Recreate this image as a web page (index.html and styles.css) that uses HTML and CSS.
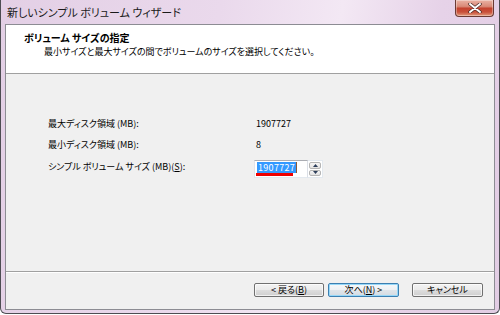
FILE: index.html
```html
<!DOCTYPE html>
<html lang="ja">
<head>
<meta charset="utf-8">
<title>新しいシンプル ボリューム ウィザード</title>
<link rel="stylesheet" href="styles.css">
</head>
<body>
<div class="window">
  <div class="titlebar">
    <span class="title">新しいシンプル ボリューム ウィザード</span>
    <div class="close">
      <svg width="14" height="10" viewBox="0 0 14 10">
        <path d="M2 1 L12 9 M12 1 L2 9" stroke="#4a2a26" stroke-width="3.4" stroke-linecap="round"/>
        <path d="M2 1 L12 9 M12 1 L2 9" stroke="#ffffff" stroke-width="2" stroke-linecap="round"/>
      </svg>
    </div>
  </div>
  <div class="client">
    <div class="header">
      <div class="h-title">ボリューム サイズの指定</div>
      <div class="h-sub">最小サイズと最大サイズの間でボリュームのサイズを選択してください。</div>
    </div>
    <div class="body">
      <div class="form">
        <div class="label">最大ディスク領域 (MB):</div>
        <div class="value">1907727</div>
        <div class="label">最小ディスク領域 (MB):</div>
        <div class="value">8</div>
        <div class="label label-last">シンプル ボリューム サイズ (MB)(<u>S</u>):</div>
        <div class="spin">
          <div class="input"><span class="sel">1907727</span><span class="caret"></span><span class="mark"></span></div>
          <div class="arrows">
            <div class="arrow"><svg width="5" height="3" viewBox="0 0 5 3"><path d="M0 3 L2.5 0 L5 3Z" fill="#2c3e5a"/></svg></div>
            <div class="arrow"><svg width="5" height="3" viewBox="0 0 5 3"><path d="M0 0 L2.5 3 L5 0Z" fill="#2c3e5a"/></svg></div>
          </div>
        </div>
      </div>
    </div>
    <div class="footer">
      <button class="btn btn-back">&lt; 戻る(<u>B</u>)</button>
      <button class="btn btn-next">次へ(<u>N</u>) &gt;</button>
      <button class="btn btn-cancel">キャンセル</button>
    </div>
  </div>
</div>
</body>
</html>
```
FILE: styles.css
```css
* { box-sizing: border-box; }
html, body { margin: 0; padding: 0; background: #ffffff; }
body {
  width: 500px;
  height: 315px;
  overflow: hidden;
  font-family: "Noto Sans CJK JP", "Noto Sans", sans-serif;
  font-feature-settings: "palt";
  color: #000;
}
.window {
  width: 500px;
  height: 314px;
  border: 1px solid #4d4d52;
  border-top: none;
  border-radius: 0 0 6px 6px;
  background: linear-gradient(100deg, #e3cfe5 0%, #ead9ec 40%, #f3e8f4 62%, #e6d2e8 80%, #e2cde4 100%);
  display: flex;
  flex-direction: column;
}
.titlebar {
  height: 24px;
  display: flex;
  align-items: flex-start;
  padding-left: 6px;
}
.title {
  font-size: 11px;
  line-height: 24px;
  color: #1a1a1a;
  white-space: pre;
}
.close {
  margin-left: auto;
  margin-right: 5px;
  width: 39px;
  height: 17px;
  border: 1px solid #6a3a34;
  border-top: none;
  border-radius: 0 0 4px 4px;
  background: linear-gradient(#eab2a4 0%, #d98a78 40%, #c4432f 52%, #c8503a 75%, #e29a7c 100%);
  display: flex;
  align-items: center;
  justify-content: center;
  box-shadow: inset 0 0 0 1px rgba(255,255,255,0.35);
}
.close svg { display: block; }
.client {
  margin: 0 4px 3px 4px;
  flex: 1;
  border: 1px solid #8c8c93;
  background: #f0f0f0;
  display: flex;
  flex-direction: column;
}
.header {
  height: 49px;
  background: #ffffff;
  border-bottom: 1px solid #a0a0a0;
  padding-left: 18px;
  padding-top: 6px;
}
.h-title {
  font-size: 10px;
  font-weight: bold;
  line-height: 14px;
}
.h-sub {
  font-size: 9px;
  line-height: 14px;
  padding-left: 20px;
}
.body {
  height: 198px;
  border-bottom: 1px solid #a0a0a0;
  padding: 39px 0 0 42px;
  font-size: 9px;
}
.form {
  display: grid;
  grid-template-columns: 208px auto;
  grid-template-rows: 21px 21px auto;
  align-items: center;
}
.label, .value { line-height: 21px; white-space: pre; }
.label-last { align-self: start; margin-top: 2px; line-height: 20px; }
.spin {
  align-self: start;
  margin-top: 5px;
  margin-left: -2px;
  display: flex;
  height: 18px;
}
.input {
  position: relative;
  width: 54px;
  height: 18px;
  background: #ffffff;
  border: 1px solid #abadb3;
  border-left-color: #e2e3ea;
  border-right-color: #dbdfe6;
  border-bottom-color: #e3e9ef;
  padding: 1px 0 0 2px;
  display: flex;
  align-items: flex-start;
}
.sel {
  background: #3399ff;
  color: #ffffff;
  font-size: 9px;
  line-height: 11px;
  height: 11px;
  padding: 0 1px;
  letter-spacing: 0.3px;
}
.caret {
  width: 1px;
  height: 11px;
  background: #8a5a3a;
}
.mark {
  position: absolute;
  left: 1px;
  top: 12px;
  width: 37px;
  height: 3px;
  background: #ee0000;
}
.arrows {
  width: 15px;
  height: 18px;
  display: flex;
  flex-direction: column;
  gap: 1px;
  padding: 1px 0;
  background: #ffffff;
  border: 1px solid #e3e9ef;
  border-left: none;
}
.arrow {
  flex: 1;
  border: 1px solid #b5b5b5;
  border-radius: 2px;
  background: linear-gradient(#f6f6f6, #e2e2e2);
  display: flex;
  align-items: center;
  justify-content: center;
  margin: 0 1px;
}
.arrow svg { display: block; }
.footer {
  flex: 1;
  border-top: 1px solid #ffffff;
  display: flex;
  align-items: flex-start;
  padding: 10px 11px 0 0;
  justify-content: flex-end;
}
.btn {
  height: 14px;
  width: 71px;
  padding: 0;
  margin: 0;
  font-family: "Noto Sans CJK JP", "Noto Sans", sans-serif;
  font-feature-settings: "palt";
  font-size: 9px;
  line-height: 12px;
  color: #000;
  border: 1px solid #707070;
  border-radius: 2px;
  background: linear-gradient(#f3f3f3 0%, #ebebeb 48%, #dddddd 52%, #cfcfcf 100%);
  box-shadow: inset 0 0 0 1px rgba(255,255,255,0.7);
  white-space: pre;
}
.btn-back { width: 70px; }
.btn-next {
  margin-left: 4px;
  border-color: #3c7fb1;
  box-shadow: inset 0 0 0 1px #97d8f8;
  background: linear-gradient(#f6f8fa 0%, #eef1f4 48%, #e0e5ea 52%, #d4dbe2 100%);
}
.btn-cancel { margin-left: 13px; }
u { text-decoration: underline; text-underline-offset: 1px; }
```
